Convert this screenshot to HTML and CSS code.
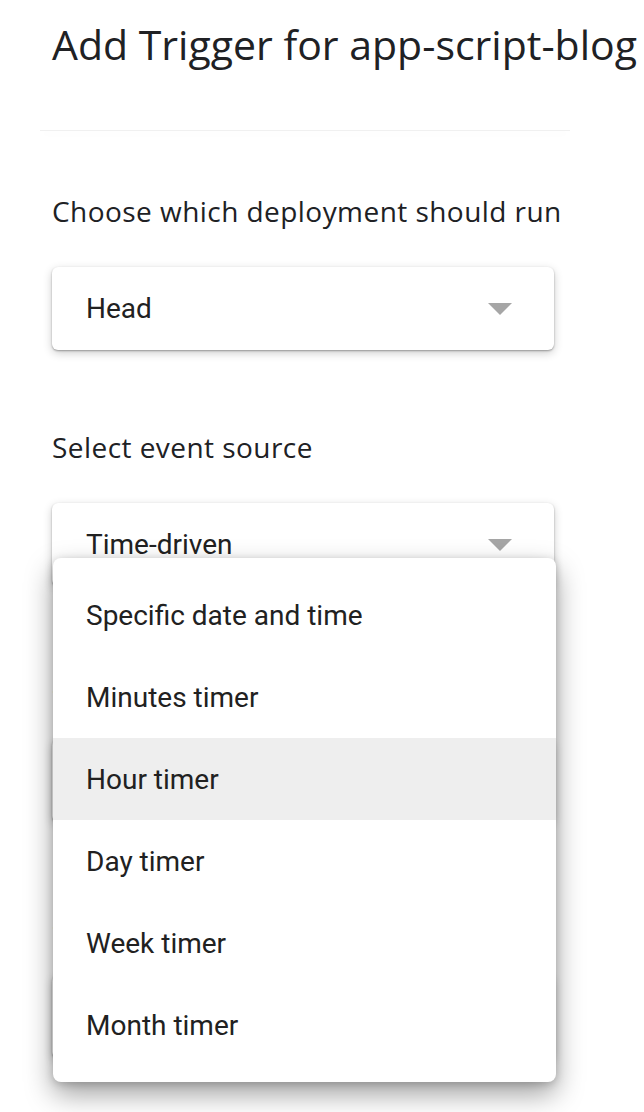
FILE: index.html
```html
<!DOCTYPE html>
<html lang="en">
<head>
<meta charset="utf-8">
<title>Add Trigger</title>
<link rel="stylesheet" href="styles.css">
</head>
<body>
<main class="page">
  <h1 class="title">Add Trigger for app-script-blog</h1>
  <div class="divider"></div>

  <section class="field">
    <p class="label">Choose which deployment should run</p>
    <div class="select"><span class="value">Head</span><span class="arrow"></span></div>
  </section>

  <section class="field">
    <p class="label">Select event source</p>
    <div class="select-wrap">
      <div class="select"><span class="value">Time-driven</span><span class="arrow"></span></div>
      <ul class="menu">
        <li class="item">Specific date and time</li>
        <li class="item">Minutes timer</li>
        <li class="item active">Hour timer</li>
        <li class="item">Day timer</li>
        <li class="item">Week timer</li>
        <li class="item">Month timer</li>
      </ul>
    </div>
  </section>

  <section class="field">
    <p class="label">Select type of time based trigger</p>
    <div class="select"><span class="value">Hour timer</span><span class="arrow"></span></div>
  </section>

  <section class="field">
    <p class="label">Select hour interval</p>
    <div class="select"><span class="value">Every hour</span><span class="arrow"></span></div>
  </section>
</main>
</body>
</html>
```

FILE: styles.css
```css
* { box-sizing: border-box; }

html, body {
  margin: 0;
  padding: 0;
  background: #ffffff;
}

body {
  font-family: "Open Sans", "Noto Sans", sans-serif;
  color: #202124;
  overflow: hidden;
}

.page {
  width: 644px;
  height: 1112px;
  padding: 19px 0 0 52px;
  overflow: hidden;
}

.title {
  margin: 0;
  font-size: 41px;
  line-height: 50px;
  font-weight: 400;
  white-space: nowrap;
  letter-spacing: 0;
}

.divider {
  width: 530px;
  height: 1px;
  margin: 61px 0 0 -12px;
  background: #f0f0f0;
  box-shadow: 0 3px 8px rgba(0, 0, 0, 0.05);
}

.field {
  margin-top: 63px;
}

.field + .field {
  margin-top: 80px;
}

.label {
  margin: 0 0 39px;
  font-size: 28px;
  line-height: 34px;
  font-weight: 400;
  letter-spacing: 0.45px;
  white-space: nowrap;
}

.select-wrap {
  position: relative;
  width: 502px;
}

.select {
  width: 502px;
  height: 83px;
  display: flex;
  align-items: center;
  justify-content: space-between;
  padding: 0 42px 0 34px;
  border-radius: 6px;
  background: #ffffff;
  box-shadow: 0 1px 2px rgba(0, 0, 0, 0.32), 0 3px 10px rgba(0, 0, 0, 0.2);
  font-family: Roboto, "Noto Sans", sans-serif;
  font-size: 28px;
  color: #212121;
}

.arrow {
  width: 0;
  height: 0;
  border-left: 12px solid transparent;
  border-right: 12px solid transparent;
  border-top: 12px solid #a6a6a6;
}

.menu {
  position: absolute;
  left: 1px;
  top: 55px;
  width: 503px;
  margin: 0;
  padding: 16px 0;
  list-style: none;
  background: #ffffff;
  border-radius: 8px;
  box-shadow: 0 12px 28px rgba(0, 0, 0, 0.38), 0 2px 8px rgba(0, 0, 0, 0.18);
  font-family: Roboto, "Noto Sans", sans-serif;
  font-size: 28px;
  color: #212121;
  z-index: 2;
}

.item {
  height: 82px;
  display: flex;
  align-items: center;
  padding-left: 33px;
  white-space: nowrap;
}

.item.active {
  background: #eeeeee;
}
```
